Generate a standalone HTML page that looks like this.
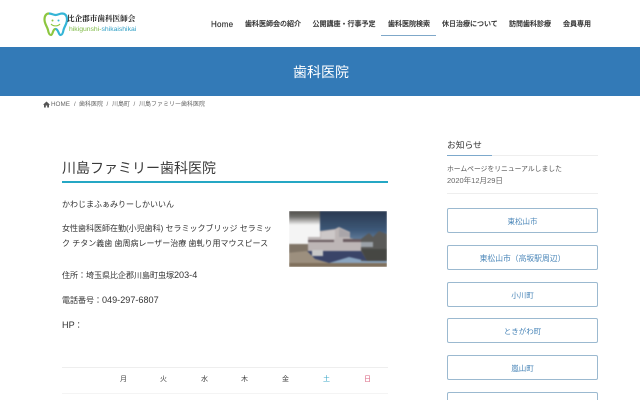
<!DOCTYPE html>
<html lang="ja">
<head>
<meta charset="utf-8">
<title>川島ファミリー歯科医院</title>
<style>
html,body{margin:0;padding:0;background:#fff;width:640px;height:400px;overflow:hidden;}
#w{position:relative;width:640px;height:400px;overflow:hidden;font-family:"Liberation Sans","Noto Sans CJK JP",sans-serif;color:#333;}
.t{position:absolute;white-space:nowrap;line-height:1;}
.nav{font-size:7px;top:20px;line-height:9px;color:#333;font-weight:500;-webkit-text-stroke:.15px #333;}
.r{position:absolute;}
.bc{font-size:6px;top:101px;line-height:8px;color:#666;}
.b{position:absolute;left:447px;width:149px;height:23px;border:1px solid #9bb9d0;border-radius:2px;text-align:center;line-height:25px;font-size:7.500px;color:#4a86b8;background:#fff;}
.p{font-size:8px;color:#333;left:62px;}
.p span{font-size:9.100px;}
.d{font-size:7px;top:376px;color:#444;}
</style>
</head>
<body>
<div id="w">
<svg class="r" style="left:43px;top:11px" width="26" height="26" viewBox="0 0 26 26">
<path d="M6 2.500C3 2.500 1.500 5 1.500 8.500C1.500 13 4 15 5 19C5.500 22 6.500 24 8 24C10 24 9.500 18 12.500 18" fill="none" stroke="#8cc63f" stroke-width="2.200"/>
<path d="M6 2.500C9 2.500 10.500 4 12.500 4C15 4 16.500 2.500 19 2.500C22.500 2.500 24 5 24 8.500C24 13 21.500 15 20.500 19C20 22 19 24 17.500 24C15.500 24 15.500 18 12.500 18" fill="none" stroke="#35b5d6" stroke-width="2.200"/>
<circle cx="9.500" cy="9.500" r="1" fill="#8cc63f"/><circle cx="15.500" cy="9.500" r="1" fill="#35b5d6"/>
<path d="M8 13C10 15.500 15 15.500 17 13" fill="none" stroke="#8cc63f" stroke-width="1.100"/>
</svg>
<div class="t" style="left:67px;top:13px;font-size:7.600px;line-height:11px;font-family:'Liberation Serif','Noto Serif CJK SC',serif;font-weight:700;color:#222;">比企郡市歯科医師会</div>
<div class="t" style="left:69px;top:25px;font-size:6.800px;line-height:9px;font-family:'Liberation Sans',sans-serif;color:#7cb942;">hikigunshi-<span style="color:#2f9fc4">shikaishikai</span></div>

<div class="t nav" style="left:211px;font-size:8px;letter-spacing:.25px;">Home</div>
<div class="t nav" style="left:245px;">歯科医師会の紹介</div>
<div class="t nav" style="left:312.500px;">公開講座・行事予定</div>
<div class="t nav" style="left:388px;">歯科医院検索</div>
<div class="t nav" style="left:442px;">休日治療について</div>
<div class="t nav" style="left:509px;">訪問歯科診療</div>
<div class="t nav" style="left:563px;">会員専用</div>
<div class="r" style="left:381px;top:35px;width:55px;height:1px;background:#7fa8c9;"></div>

<div class="r" style="left:0;top:47px;width:640px;height:49px;background:#337ab7;"></div>
<div class="t" style="left:293px;top:65px;font-size:14px;color:#fff;">歯科医院</div>

<svg class="r" style="left:43px;top:101px" width="7" height="7" viewBox="0 0 7 7"><path d="M3.500 .5L0 3.700H1V6.500H2.800V4.500H4.200V6.500H6V3.700H7Z" fill="#555"/></svg>
<div class="t bc" style="left:51px;font-size:6.300px;">HOME</div>
<div class="t bc" style="left:74px;">/</div>
<div class="t bc" style="left:79px;">歯科医院</div>
<div class="t bc" style="left:106.500px;">/</div>
<div class="t bc" style="left:112px;">川島町</div>
<div class="t bc" style="left:133.500px;">/</div>
<div class="t bc" style="left:139px;">川島ファミリー歯科医院</div>

<div class="t" style="left:62px;top:160px;font-size:14px;line-height:16px;color:#3a3a3a;">川島ファミリー歯科医院</div>
<div class="r" style="left:62px;top:181px;width:326px;height:2px;background:#25a7c4;"></div>

<div class="t p" style="top:201px;">かわじまふぁみりーしかいいん</div>
<div class="t p" style="top:225px;">女性歯科医師在勤(小児歯科) セラミックブリッジ セラミッ</div>
<div class="t p" style="top:240px;">ク チタン義歯 歯周病レーザー治療 歯軋り用マウスピース</div>
<div class="t p" style="top:271px;">住所：埼玉県比企郡川島町虫塚<span>203-4</span></div>
<div class="t p" style="top:296px;">電話番号：<span>049-297-6807</span></div>
<div class="t p" style="top:321px;"><span>HP</span>：</div>

<div class="r" style="left:289px;top:211px;width:98px;height:56px;overflow:hidden;">
<svg style="display:block;filter:blur(.7px)" width="98" height="56" viewBox="0 0 98 56">
<defs><linearGradient id="s" x1="0" y1="0" x2="0" y2="1"><stop offset="0" stop-color="#27354c"/><stop offset=".35" stop-color="#3d5878"/><stop offset=".7" stop-color="#8aa4bf"/></linearGradient>
<linearGradient id="l" x1="0" y1="0" x2="0" y2="1"><stop offset="0" stop-color="#44423f"/><stop offset=".2" stop-color="#6e6d6a"/><stop offset=".42" stop-color="#f4f4f4"/><stop offset=".6" stop-color="#f4f4f4"/></linearGradient></defs>
<rect x="-2" y="-2" width="102" height="60" fill="url(#s)"/>
<rect x="-2" y="-2" width="33" height="38" fill="url(#l)"/>
<path d="M-2 33H20V58H-2Z" fill="#7f7466"/>
<path d="M72 28L80 22L84 26L90 20L100 24V50H72Z" fill="#5a5a58"/>
<path d="M19 26H31V20L46 18L50 16L61 21V27L72 30V40H19Z" fill="#bdb6b6"/>
<path d="M32 21L46 19V28H32Z" fill="#cdc8c8"/>
<path d="M50 17L61 22V26H50Z" fill="#a9a5a9"/>
<path d="M19 29H45V31H19ZM54 28H72V31H54Z" fill="#6a5c60"/>
<path d="M72 31H84V36H72Z" fill="#9ba2a8"/>
<path d="M18 40H72L78 50L60 46L40 52L26 48Z" fill="#3a4468"/>
<rect x="23" y="39" width="11" height="6" fill="#c8c8c8"/>
<path d="M-2 42L18 40L26 48L40 52H-2Z" fill="#9c8f7e"/>
<path d="M72 38H100V50H78Z" fill="#464743"/>
<path d="M-2 52H100V58H-2Z" fill="#80705c"/>
</svg>
</div>

<div class="r" style="left:62px;top:367px;width:326px;height:1px;background:#eee;"></div>
<div class="r" style="left:62px;top:393px;width:326px;height:1px;background:#f4f4f4;"></div>
<div class="t d" style="left:120px;">月</div>
<div class="t d" style="left:160px;">火</div>
<div class="t d" style="left:201px;">水</div>
<div class="t d" style="left:241px;">木</div>
<div class="t d" style="left:282px;">金</div>
<div class="t d" style="left:323px;color:#3fa9c9;">土</div>
<div class="t d" style="left:364px;color:#d9607e;">日</div>

<div class="t" style="left:447px;top:140px;font-size:8.750px;line-height:10px;color:#333;">お知らせ</div>
<div class="r" style="left:447px;top:155px;width:151px;height:1px;background:#eee;"></div>
<div class="r" style="left:447px;top:155px;width:45px;height:1px;background:#7da9cc;"></div>
<div class="t" style="left:447px;top:166px;font-size:6.800px;line-height:8px;color:#555;">ホームページをリニューアルしました</div>
<div class="t" style="left:447px;top:177px;font-size:7.500px;line-height:8px;color:#666;">2020年12月29日</div>
<div class="r" style="left:447px;top:193px;width:151px;height:1px;background:#eee;"></div>

<div class="b" style="top:208px;">東松山市</div>
<div class="b" style="top:245px;font-size:7.800px;">東松山市（高坂駅周辺）</div>
<div class="b" style="top:282px;">小川町</div>
<div class="b" style="top:318px;">ときがわ町</div>
<div class="b" style="top:355px;">嵐山町</div>
<div class="b" style="top:392px;"></div>
</div>
</body>
</html>
